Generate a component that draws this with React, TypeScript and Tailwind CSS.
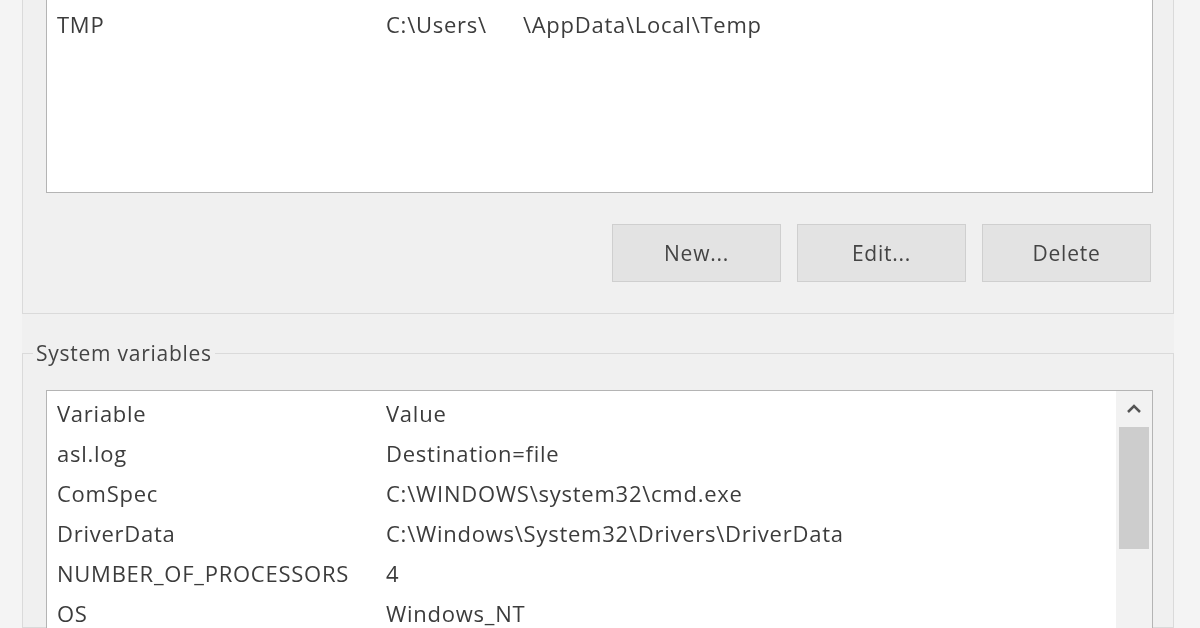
import React from "react";

const font = {
  fontFamily: '"Open Sans", "Noto Sans", "Liberation Sans", sans-serif',
  letterSpacing: "0.75px",
};

const sysRows: [string, string][] = [
  ["Variable", "Value"],
  ["asl.log", "Destination=file"],
  ["ComSpec", "C:\\WINDOWS\\system32\\cmd.exe"],
  ["DriverData", "C:\\Windows\\System32\\Drivers\\DriverData"],
  ["NUMBER_OF_PROCESSORS", "4"],
  ["OS", "Windows_NT"],
];

function Btn({ label }: { label: string }) {
  return (
    <button className="w-[169px] h-[58px] bg-[#e3e3e3] border border-[#cfcfcf] text-[21px] text-[#444] flex items-center justify-center">
      {label}
    </button>
  );
}

export default function App() {
  return (
    <div
      className="w-[1200px] h-[628px] overflow-hidden bg-[#f4f4f4] text-[#3c3c3c] text-[22px] leading-none blur-[0.4px]"
      style={font}
    >
      <div className="ml-[22px] w-[1152px] h-full bg-[#f0f0f0] flex flex-col">
        {/* User variables group (top cut off) */}
        <div className="h-[314px] border-l border-r border-b border-[#dadada] flex flex-col pl-[23px] pr-[20px]">
          <div className="h-[193px] bg-white border-l border-r border-b border-[#b4b4b4] pl-[10px] pt-[10px]">
            <div className="flex items-center h-[28px]">
              <div className="w-[329px]">TMP</div>
              <div className="flex">
                <span>C:\Users\</span>
                <span className="ml-[36px]">\AppData\Local\Temp</span>
              </div>
            </div>
          </div>
          <div className="mt-[31px] flex justify-end gap-[16px] pr-[2px]">
            <Btn label="New..." />
            <Btn label="Edit..." />
            <Btn label="Delete" />
          </div>
        </div>

        {/* System variables group */}
        <fieldset className="mt-[27px] flex-1 border border-[#dadada] min-h-0">
          <legend className="ml-[10px] px-[3px] text-[21px] leading-[24px] text-[#444]">System variables</legend>
          <div className="pl-[23px] pr-[20px]">
            <div className="mt-[25px] h-[260px] bg-white border border-[#b4b4b4] flex">
              <div className="flex-1 pl-[10px] pt-[2px]">
                {sysRows.map(([k, v]) => (
                  <div key={k} className="flex items-center h-[40px]">
                    <div className="w-[329px]">{k}</div>
                    <div>{v}</div>
                  </div>
                ))}
              </div>
              <div className="w-[36px] bg-[#f2f2f2] flex flex-col items-center">
                <div className="h-[36px] w-full flex items-center justify-center">
                  <svg width="16" height="10" viewBox="0 0 16 10">
                    <path d="M2 8 L8 2 L14 8" fill="none" stroke="#555" strokeWidth="2.5" />
                  </svg>
                </div>
                <div className="w-[30px] h-[122px] bg-[#cdcdcd]" />
              </div>
            </div>
          </div>
        </fieldset>
      </div>
    </div>
  );
}
